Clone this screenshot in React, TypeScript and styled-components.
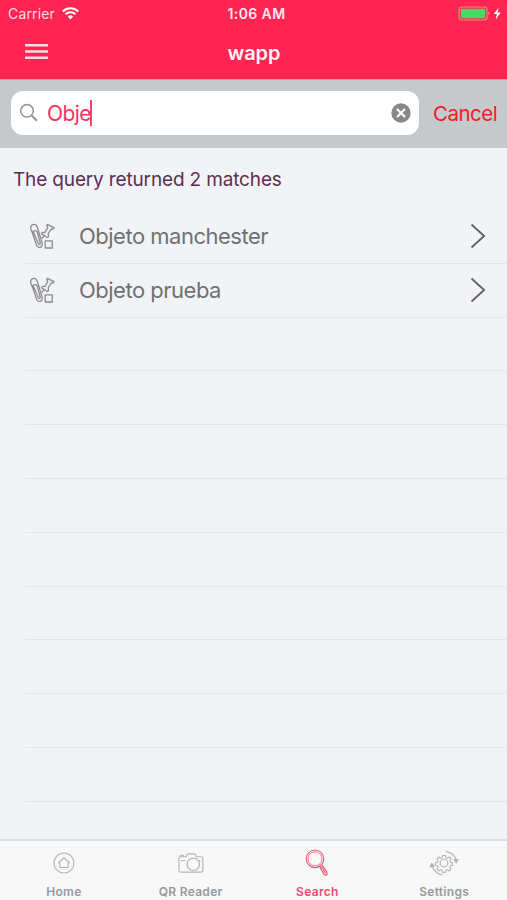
import React from "react";
import styled, { createGlobalStyle } from "styled-components";

const GlobalStyle = createGlobalStyle`
  * { box-sizing: border-box; }
  body { margin: 0; background: #f2f3f6; font-family: Inter, "Liberation Sans", sans-serif; }
`;

const Screen = styled.div`
  width: 507px;
  height: 900px;
  display: flex;
  flex-direction: column;
  overflow: hidden;
  background: #f2f3f6;
`;

const Header = styled.header`
  height: 80px;
  flex: none;
  background: #ff2553;
  border-bottom: 1px solid #f58ba0;
  color: #fff;
`;

const Bar = styled.div<{ $height: number }>`
  display: grid;
  grid-template-columns: 1fr auto 1fr;
  align-items: center;
  height: ${(p) => p.$height}px;
`;

const Carrier = styled.div`
  display: flex;
  align-items: center;
  gap: 7px;
  padding-left: 8px;
  font-size: 14px;
  letter-spacing: 0.15px;
  color: #ffd9e0;
`;

const Clock = styled.div`
  padding-left: 6px;
  font-size: 14px;
  font-weight: 600;
  letter-spacing: 0.4px;
  color: #ffe6eb;
`;

const Battery = styled.div`
  display: flex;
  justify-content: flex-end;
  padding-right: 5px;
`;

const MenuButton = styled.button`
  display: flex;
  padding: 0 0 2px 25px;
  border: 0;
  background: none;
`;

const Title = styled.h1`
  margin: 0;
  padding: 1px 0 0 1px;
  font-size: 20px;
  font-weight: 600;
  line-height: 24px;
  letter-spacing: 0;
  color: #fff0f3;
`;

const SearchBar = styled.div`
  display: flex;
  align-items: center;
  flex: none;
  height: 68px;
  padding: 0 9px 2px 11px;
  gap: 14px;
  background: #c6c9cc;
`;

const Field = styled.div`
  display: flex;
  align-items: center;
  flex: none;
  width: 408px;
  height: 44px;
  padding: 0 8px 0 8px;
  border-radius: 12px;
  background: #fff;
`;

const Query = styled.span`
  flex: 1;
  display: flex;
  align-items: center;
  padding-left: 8px;
  font-size: 21px;
  letter-spacing: -0.6px;
  color: #f5335f;
`;

const Caret = styled.i`
  width: 2px;
  height: 26px;
  margin-left: -1px;
  background: #f5446c;
`;

const Cancel = styled.button`
  padding: 0;
  border: 0;
  background: none;
  font: 400 20.5px Inter, sans-serif;
  letter-spacing: -0.5px;
  color: #f01c1c;
`;

const Summary = styled.p`
  flex: none;
  height: 62px;
  margin: 0;
  padding: 19px 0 0 13px;
  font-size: 19px;
  line-height: 26px;
  letter-spacing: -0.15px;
  color: #5b2f52;
`;

const List = styled.ul`
  flex: 1;
  margin: 0;
  padding: 0 0 0 25px;
  list-style: none;
  overflow: hidden;
`;

const Row = styled.li`
  display: flex;
  align-items: center;
  height: 53.8px;
  padding: 0 21px 0 4px;
  border-bottom: 1px solid #e4e5e8;
`;

const RowLabel = styled.span`
  flex: 1;
  padding-left: 23px;
  font-size: 22px;
  letter-spacing: -0.5px;
  color: #707173;
`;

const TabBar = styled.nav`
  display: grid;
  grid-template-columns: repeat(4, 1fr);
  flex: none;
  height: 61px;
  border-top: 2px solid #dcdee1;
  background: #f8f8f9;
`;

const Tab = styled.div<{ $active?: boolean }>`
  display: flex;
  flex-direction: column;
  align-items: center;
  padding: 7px 0 0 1px;
  gap: 6px;
  color: ${(p) => (p.$active ? "#f0577b" : "#b4b5b7")};
`;

const TabLabel = styled.span<{ $active?: boolean }>`
  font-size: 12px;
  line-height: 15px;
  font-weight: 600;
  letter-spacing: 0.3px;
  color: ${(p) => (p.$active ? "#ef4a70" : "#98999b")};
`;

const WifiIcon = () => (
  <svg width="17" height="13" viewBox="0 0 17 13" fill="none" stroke="#fff" strokeWidth="2.1">
    <path d="M.8 4.4a11 11 0 0 1 15.4 0M3.6 7.3a7 7 0 0 1 9.8 0" />
    <path d="M5.8 9.6a3.9 3.9 0 0 1 5.4 0L8.5 12.5z" fill="#fff" stroke="none" />
  </svg>
);

const BatteryIcon = () => (
  <svg width="44" height="16" viewBox="0 0 44 16" fill="none">
    <rect x="1" y="1" width="28" height="13" rx="3" stroke="#e88a80" strokeWidth="1.2" />
    <rect x="2.8" y="2.8" width="24.4" height="9.4" rx="1" fill="#4bd865" />
    <path d="M30.5 5.5v4q2-2 0-4" fill="#f29aa5" />
    <path d="M40.5 1.7 35.8 8.1h3L37.7 13.5l5.1-7h-3.3z" fill="#fff" />
  </svg>
);

const MenuIcon = () => (
  <svg width="23" height="17" viewBox="0 0 23 17" stroke="#ffdbe2" strokeWidth="2.5">
    <path d="M0 2.3h23M0 8.6h23M0 14.8h23" />
  </svg>
);

const SearchIcon = () => (
  <svg width="20" height="20" viewBox="0 0 20 20" fill="none" stroke="#929396">
    <circle cx="8" cy="7.8" r="6.3" strokeWidth="1.5" />
    <path d="m12.7 12.6 5.2 5.2" strokeWidth="2" />
  </svg>
);

const ClearIcon = () => (
  <svg width="20" height="20" viewBox="0 0 20 20">
    <circle cx="10" cy="10" r="9.7" fill="#87888b" />
    <path d="m6 6 8 8m0-8-8 8" stroke="#fff" strokeWidth="2.2" />
  </svg>
);

const ObjectIcon = () => (
  <svg width="27" height="27" viewBox="0 0 27 27" fill="none" stroke="#8b8c8f" strokeWidth="1.3" strokeLinejoin="round" strokeLinecap="round">
    <path d="M3.8 11 2 6.5C.2 1.2 6.4-.7 8.3 4.2l4.8 15.7c1.2 4.8-4.4 6.2-5.7 2L2.6 7.4M4.2 8.8l4.9 11.5c.7 1.8 2.6 1 2.1-.6L8 8.4Q5.6 6.6 4.2 8.8" />
    <path d="m18.2 1.3 6.8 3.4-1 1.4-1.6-.2-3.2 4.7.4 3.1-1.2.8-6-3.7.8-1.3 2.8-.1 2.8-4.8-.9-1.9zM15.1 12.3l-2 3" />
    <path d="M16.2 17.9h7.1V25h-7.1z" />
  </svg>
);

const ChevronIcon = () => (
  <svg width="16" height="26" viewBox="0 0 16 26" fill="none" stroke="#626366" strokeWidth="1.9">
    <path d="m1.5 1.5 12.6 11.5L1.5 24.5" />
  </svg>
);

const tabIconProps = {
  width: 30,
  height: 30,
  viewBox: "0 0 30 30",
  fill: "none",
  stroke: "currentColor",
  strokeWidth: 1.15,
  strokeLinejoin: "round" as const,
};

const HomeIcon = () => (
  <svg {...tabIconProps}>
    <circle cx="15" cy="15" r="10" />
    <path d="m9.5 14.7 5.5-5 5.5 5h-1.3v4.8h-8.4v-4.8z" />
  </svg>
);

const CameraIcon = () => (
  <svg {...tabIconProps}>
    <path d="M4.2 8.7h6l1.5-2.9h7.1l1.6 2.9h4.7q1.8 0 1.8 1.8v11.8q0 1.8-1.8 1.8H4.8Q3 24.1 3 22.3V10.4q0-1.7 1.2-1.7zM4.4 8.5V7.2h3.2v1.3M5 12.5h4.3M22.5 12.5h2" />
    <circle cx="17.3" cy="16.3" r="6.2" />
  </svg>
);

const MagnifierIcon = () => (
  <svg {...tabIconProps}>
    <circle cx="13" cy="10.8" r="8.8" />
    <circle cx="13" cy="10.8" r="7" strokeWidth=".8" />
    <path d="m17.5 18 1.5 2.2M20 16.8l1.3 1.9M18.5 20.1l2.6-1.7 3.8 5.7q.8 2.3-1 3-1.2.2-2-1zM20.5 20.3l3 4.8" />
  </svg>
);

const SettingsIcon = () => (
  <svg {...tabIconProps}>
    <circle cx="15" cy="15" r="3.8" />
    <path d="m13.6 7.5 2.8 0 .5 2.1 1.4.6 1.9-1.1 1.8 1.9-1.1 1.8.6 1.4 2 .5v2.6l-2 .5-.6 1.4 1.1 1.9-1.9 1.8-1.8-1.1-1.4.6-.5 2h-2.8l-.5-2-1.4-.6-1.8 1.1-1.9-1.8 1.1-1.9-.6-1.4-2-.5v-2.6l2-.5.6-1.4L8 11l1.9-1.9 1.8 1.1 1.4-.6z" />
    <path d="M16.7 3.4q8.7 1.6 10.7 9.3M13.4 26.9Q5.6 25.5 3 17.7" />
    <path d="m25 11.7 2.4 3.1 1.4-3.6zM1.3 19l1.4-3.7 2.5 2.8z" fill="currentColor" />
  </svg>
);

const results = ["Objeto manchester", "Objeto prueba"];

const tabs = [
  { label: "Home", Icon: HomeIcon },
  { label: "QR Reader", Icon: CameraIcon },
  { label: "Search", Icon: MagnifierIcon, active: true },
  { label: "Settings", Icon: SettingsIcon },
];

export default function App() {
  return (
    <Screen>
      <GlobalStyle />
      <Header>
        <Bar $height={27}>
          <Carrier>Carrier <WifiIcon /></Carrier>
          <Clock>1:06 AM</Clock>
          <Battery><BatteryIcon /></Battery>
        </Bar>
        <Bar $height={50}>
          <MenuButton aria-label="Menu"><MenuIcon /></MenuButton>
          <Title>wapp</Title>
        </Bar>
      </Header>
      <SearchBar>
        <Field>
          <SearchIcon />
          <Query>Obje<Caret /></Query>
          <ClearIcon />
        </Field>
        <Cancel>Cancel</Cancel>
      </SearchBar>
      <Summary>The query returned 2 matches</Summary>
      <List>
        {results.map((label) => (
          <Row key={label}>
            <ObjectIcon />
            <RowLabel>{label}</RowLabel>
            <ChevronIcon />
          </Row>
        ))}
        {Array.from({ length: 9 }, (_, i) => <Row key={i} />)}
      </List>
      <TabBar>
        {tabs.map(({ label, Icon, active }) => (
          <Tab key={label} $active={active}>
            <Icon />
            <TabLabel $active={active}>{label}</TabLabel>
          </Tab>
        ))}
      </TabBar>
    </Screen>
  );
}
